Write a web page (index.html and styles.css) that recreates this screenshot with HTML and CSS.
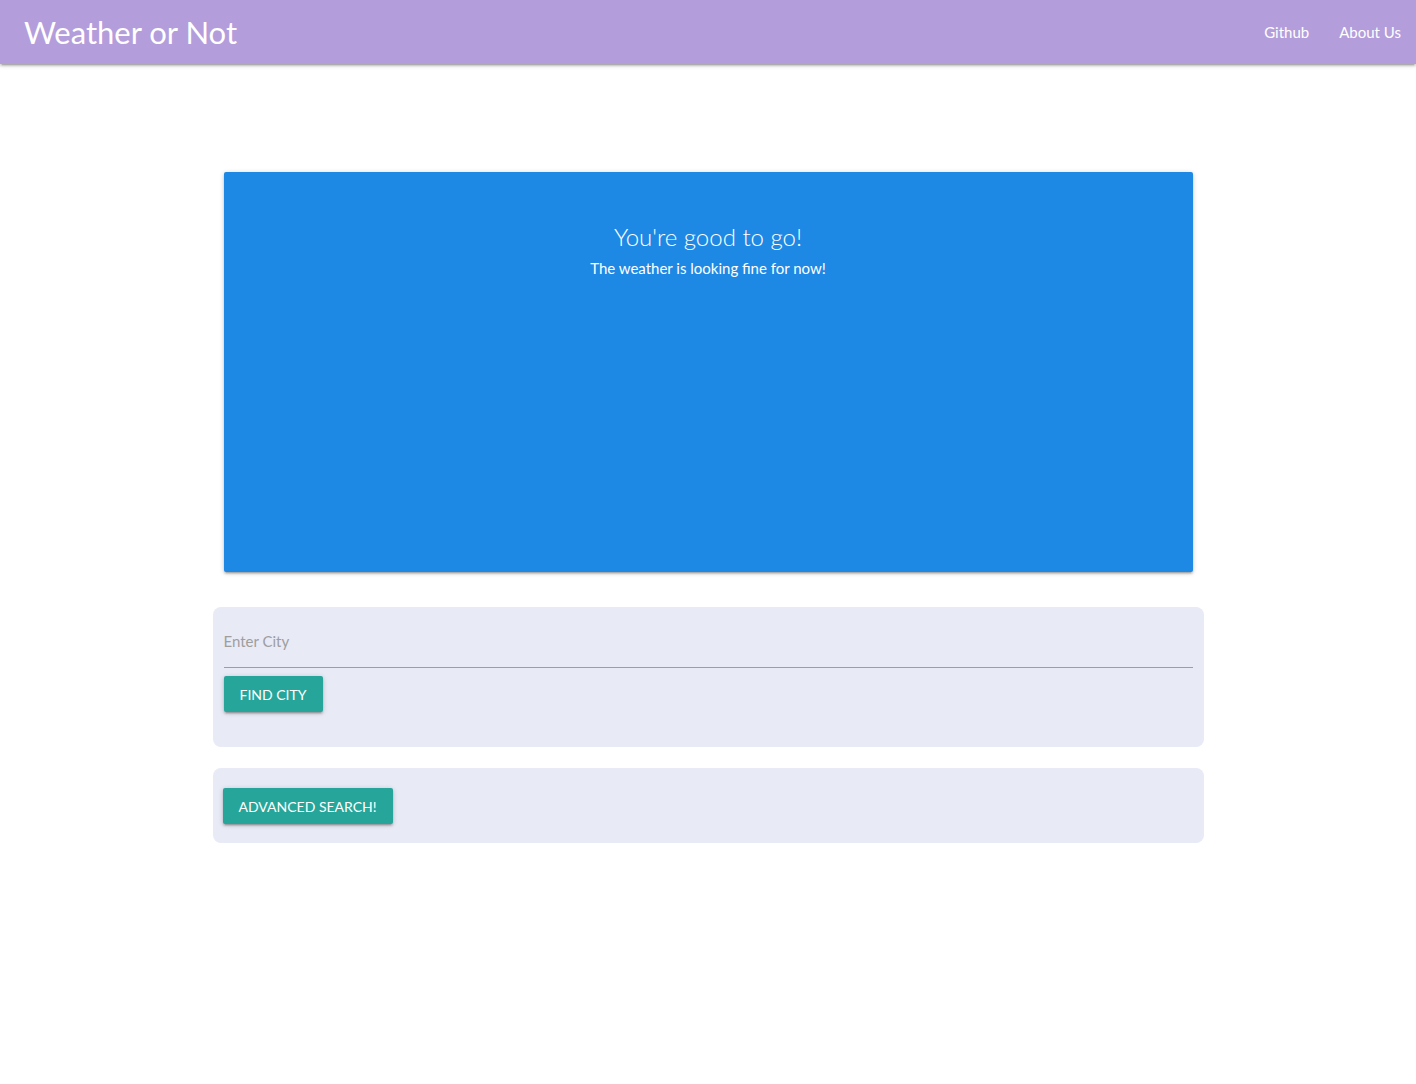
FILE: index.html
```html
<!DOCTYPE html>
<html lang="en">
<head>
<meta charset="utf-8">
<title>Weather or Not</title>
<link rel="stylesheet" href="styles.css">
</head>
<body>
<nav class="navbar">
  <a class="brand" href="#">Weather or Not</a>
  <ul class="nav-links">
    <li><a href="#">Github</a></li>
    <li><a href="#">About Us</a></li>
  </ul>
</nav>
<main class="container">
  <div class="card">
    <h2 class="card-title">You're good to go!</h2>
    <p class="card-sub">The weather is looking fine for now!</p>
  </div>
  <section class="panel panel-search">
    <input class="city-input" type="text" placeholder="Enter City">
    <button class="btn">Find City</button>
  </section>
  <section class="panel panel-adv">
    <button class="btn">Advanced Search!</button>
  </section>
</main>
</body>
</html>
```
FILE: styles.css
```css
* { box-sizing: border-box; }
html, body { margin: 0; padding: 0; }
body {
  font-family: "Lato", "Open Sans", "Noto Sans", sans-serif;
  background: #fff;
  color: rgba(0,0,0,0.87);
}
.navbar {
  height: 64px;
  background: #b39ddb;
  display: flex;
  align-items: center;
  justify-content: space-between;
  box-shadow: 0 2px 2px 0 rgba(0,0,0,0.14), 0 3px 1px -2px rgba(0,0,0,0.12), 0 1px 5px 0 rgba(0,0,0,0.2);
}
.brand {
  color: #fff;
  text-decoration: none;
  font-size: 31px;
  font-weight: 400;
  padding-left: 24px;
  line-height: 64px;
}
.nav-links {
  list-style: none;
  margin: 0;
  padding: 0;
  display: flex;
}
.nav-links a {
  display: block;
  color: #fff;
  text-decoration: none;
  font-size: 15px;
  padding: 0 15px;
  line-height: 64px;
}
.container {
  width: 991px;
  margin: 108px auto 0;
}
.card {
  margin: 0 11px;
  height: 400px;
  background: #1e88e5;
  border-radius: 2px;
  color: #fff;
  text-align: center;
  padding-top: 49px;
  box-shadow: 0 2px 2px 0 rgba(0,0,0,0.14), 0 3px 1px -2px rgba(0,0,0,0.12), 0 1px 5px 0 rgba(0,0,0,0.2);
}
.card-title {
  margin: 0;
  font-size: 24px;
  font-weight: 300;
  line-height: 32px;
}
.card-sub {
  margin: 2px 0 0;
  font-size: 15px;
  line-height: 26px;
}
.panel {
  background: #e8eaf6;
  border-radius: 8px;
}
.panel-search {
  margin-top: 35px;
  padding: 11px 11px 35px;
}
.panel-adv {
  margin-top: 21px;
  padding: 20px 10px 19px;
}
.city-input {
  display: block;
  width: 100%;
  height: 50px;
  border: none;
  border-bottom: 1px solid #9e9e9e;
  background: transparent;
  font-family: inherit;
  font-size: 15px;
  padding: 0 0 4px;
  margin: 0 0 8px;
  outline: none;
  color: #333;
}
.city-input::placeholder { color: #9e9e9e; }
.btn {
  display: block;
  height: 36px;
  background: #26a69a;
  color: #fff;
  border: none;
  border-radius: 2px;
  padding: 0 16px;
  font-family: inherit;
  font-size: 14px;
  text-transform: uppercase;
  letter-spacing: 0;
  cursor: pointer;
  box-shadow: 0 2px 2px 0 rgba(0,0,0,0.14), 0 3px 1px -2px rgba(0,0,0,0.12), 0 1px 5px 0 rgba(0,0,0,0.2);
}
```
